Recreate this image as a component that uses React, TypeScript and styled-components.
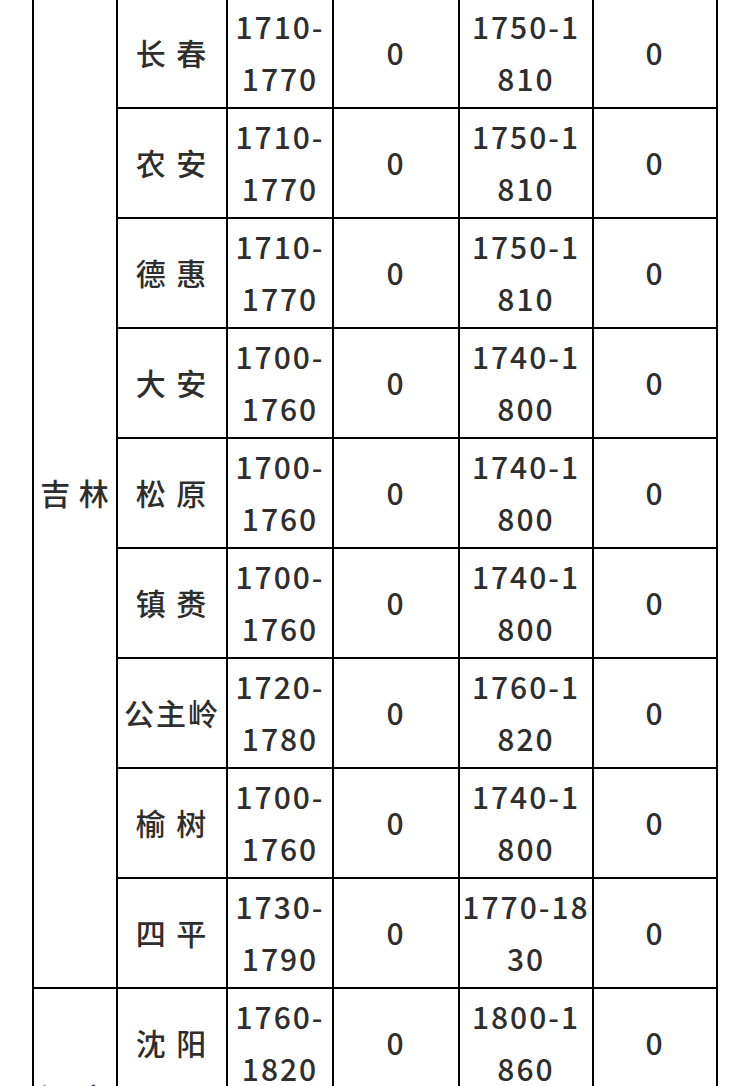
import styled, { createGlobalStyle } from 'styled-components';

const GlobalStyle = createGlobalStyle`
  html, body {
    margin: 0;
    padding: 0;
    background: #ffffff;
  }
`;

type Row = { city: string; low: string[]; high: string[] };

const widths = [84, 110, 106, 126, 134, 124];

const jilin: Row[] = [
	{ city: '长 春', low: ['1710-', '1770'], high: ['1750-1', '810'] },
	{ city: '农 安', low: ['1710-', '1770'], high: ['1750-1', '810'] },
	{ city: '德 惠', low: ['1710-', '1770'], high: ['1750-1', '810'] },
	{ city: '大 安', low: ['1700-', '1760'], high: ['1740-1', '800'] },
	{ city: '松 原', low: ['1700-', '1760'], high: ['1740-1', '800'] },
	{ city: '镇 赉', low: ['1700-', '1760'], high: ['1740-1', '800'] },
	{ city: '公主岭', low: ['1720-', '1780'], high: ['1760-1', '820'] },
	{ city: '榆 树', low: ['1700-', '1760'], high: ['1740-1', '800'] },
	{ city: '四 平', low: ['1730-', '1790'], high: ['1770-18', '30'] },
];

const liaoning: Row[] = [
	{ city: '沈 阳', low: ['1760-', '1820'], high: ['1800-1', '860'] },
	{ city: '大 连', low: ['1760-', '1820'], high: ['1800-1', '860'] },
];

function Lines({ parts }: { parts: string[] }) {
	return (
		<>
			{parts.map((p, i) => (
				<Line key={i}>{p}</Line>
			))}
		</>
	);
}

function Group({ province, rows }: { province: string; rows: Row[] }) {
	return (
		<>
			{rows.map((r, i) => (
				<tr key={r.city}>
					{i === 0 && <Province rowSpan={rows.length}>{province}</Province>}
					<Cell>{r.city}</Cell>
					<Cell>
						<Lines parts={r.low} />
					</Cell>
					<Cell>0</Cell>
					<Cell>
						<Lines parts={r.high} />
					</Cell>
					<Cell>0</Cell>
				</tr>
			))}
		</>
	);
}

export default function App() {
	return (
		<Page>
			<GlobalStyle />
			<Table>
				<colgroup>
					{widths.map((w, i) => (
						<Col key={i} $w={w} />
					))}
				</colgroup>
				<tbody>
					<Group province="吉 林" rows={jilin} />
					<Group province="辽 宁" rows={liaoning} />
				</tbody>
			</Table>
		</Page>
	);
}

const Page = styled.div`
  width: 746px;
  height: 1086px;
  overflow: hidden;
  background: #fff;
`;

const Table = styled.table`
  margin: -3px 0 0 32px;
  border-collapse: collapse;
  table-layout: fixed;
  width: 686px;
  font-family: 'Noto Sans CJK SC', 'Noto Sans', sans-serif;
  font-size: 30px;
  font-weight: 500;
  color: #2e2e2e;
`;

const Col = styled.col<{ $w: number }>`
  width: ${({ $w }) => $w}px;
`;

const Cell = styled.td`
  height: 106px;
  padding: 0 0 2px;
  border: 2px solid #000;
  text-align: center;
  vertical-align: middle;
  letter-spacing: 2px;
  line-height: 52px;
  white-space: nowrap;
`;

const Province = styled(Cell)`
  letter-spacing: 1px;
`;

const Line = styled.div`
  line-height: 52px;
`;
